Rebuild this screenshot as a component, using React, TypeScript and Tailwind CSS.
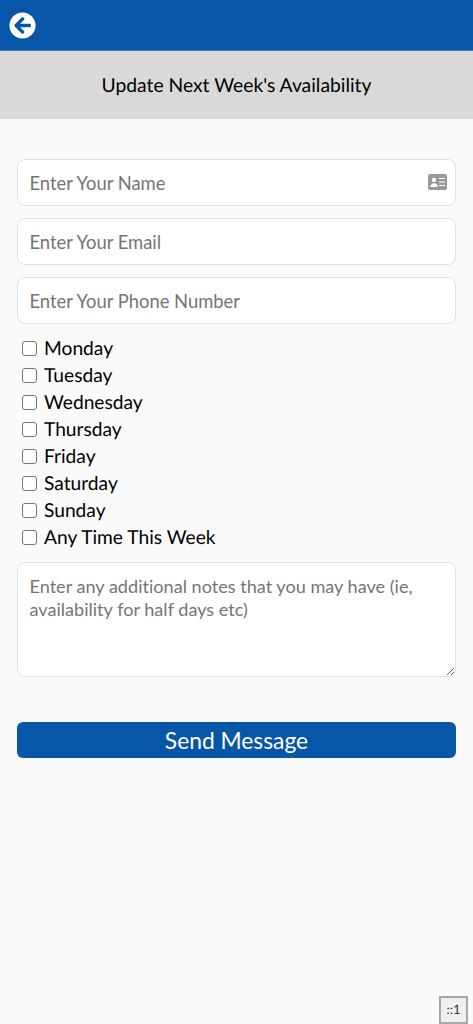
import React from "react";
import { FaArrowCircleLeft } from "react-icons/fa";

const days = [
  "Monday",
  "Tuesday",
  "Wednesday",
  "Thursday",
  "Friday",
  "Saturday",
  "Sunday",
  "Any Time This Week",
];

const inputClass =
  "w-full h-[47px] rounded-[8px] border-[1.5px] border-[#e2e2e2] bg-white pl-[11.5px] pr-[40px] text-[18.4px] text-black outline-none placeholder:text-[#757575]";

const CardIcon = () => (
  <svg viewBox="0 0 19 16" className="absolute right-[9px] top-[15px] h-[16px] w-[19px]">
    <rect width="19" height="16" rx="2" fill="#999999" />
    <circle cx="6" cy="6" r="2.2" fill="#ffffff" />
    <path d="M2.5 13c0-2.6 1.4-3.8 3.5-3.8s3.5 1.2 3.5 3.8z" fill="#ffffff" />
    <path d="M11 4.5h6M11 8h6M11 11.5h6" stroke="#ffffff" strokeWidth="1" />
  </svg>
);

export default function App() {
  return (
    <div className="relative flex min-h-[1024px] flex-col bg-[#fafafa] font-['Lato',sans-serif] text-black [font-variant-ligatures:none] [text-rendering:geometricPrecision]">
      <header className="flex h-[51px] items-center border-b border-[#3a78b8] bg-[#0756a8] pl-[9px]">
        <FaArrowCircleLeft className="h-[27px] w-[27px] text-white" />
      </header>
      <div className="flex h-[68px] items-center justify-center bg-[#d9d9d9] pt-[2px] text-[19.3px]">
        Update Next Week's Availability
      </div>
      <form className="flex flex-col px-[17px] pt-[40px]">
        <div className="relative">
          <input className={inputClass} placeholder="Enter Your Name" />
          <CardIcon />
        </div>
        <input className={`${inputClass} mt-[12px]`} placeholder="Enter Your Email" />
        <input className={`${inputClass} mt-[12px]`} placeholder="Enter Your Phone Number" />
        <div className="mt-[12px] flex flex-col">
          {days.map((day) => (
            <label key={day} className="flex h-[27px] items-center pl-[5px] text-[19.2px]">
              <span className="mb-[2px] h-[15px] w-[15px] rounded-[3px] border border-[#767676] bg-white" />
              <span className="ml-[7px]">{day}</span>
            </label>
          ))}
        </div>
        <textarea
          className="mt-[10px] h-[115px] w-full rounded-[8px] border-[1.5px] border-[#e2e2e2] bg-white px-[11.5px] pb-[10px] pt-[12px] text-[18.1px] leading-[22.5px] outline-none placeholder:text-[#757575]"
          placeholder="Enter any additional notes that you may have (ie, availability for half days etc)"
        />
        <button
          type="button"
          className="mt-[45px] h-[36px] w-full rounded-[6px] bg-[#0756a8] text-[22.8px] text-white"
        >
          Send Message
        </button>
      </form>
      <div className="absolute bottom-0 right-[5px] flex h-[28px] w-[29px] items-center justify-center border-2 border-[#a8a8a8] bg-[#efefef] text-[13px] text-[#333333]">
        ::1
      </div>
    </div>
  );
}
